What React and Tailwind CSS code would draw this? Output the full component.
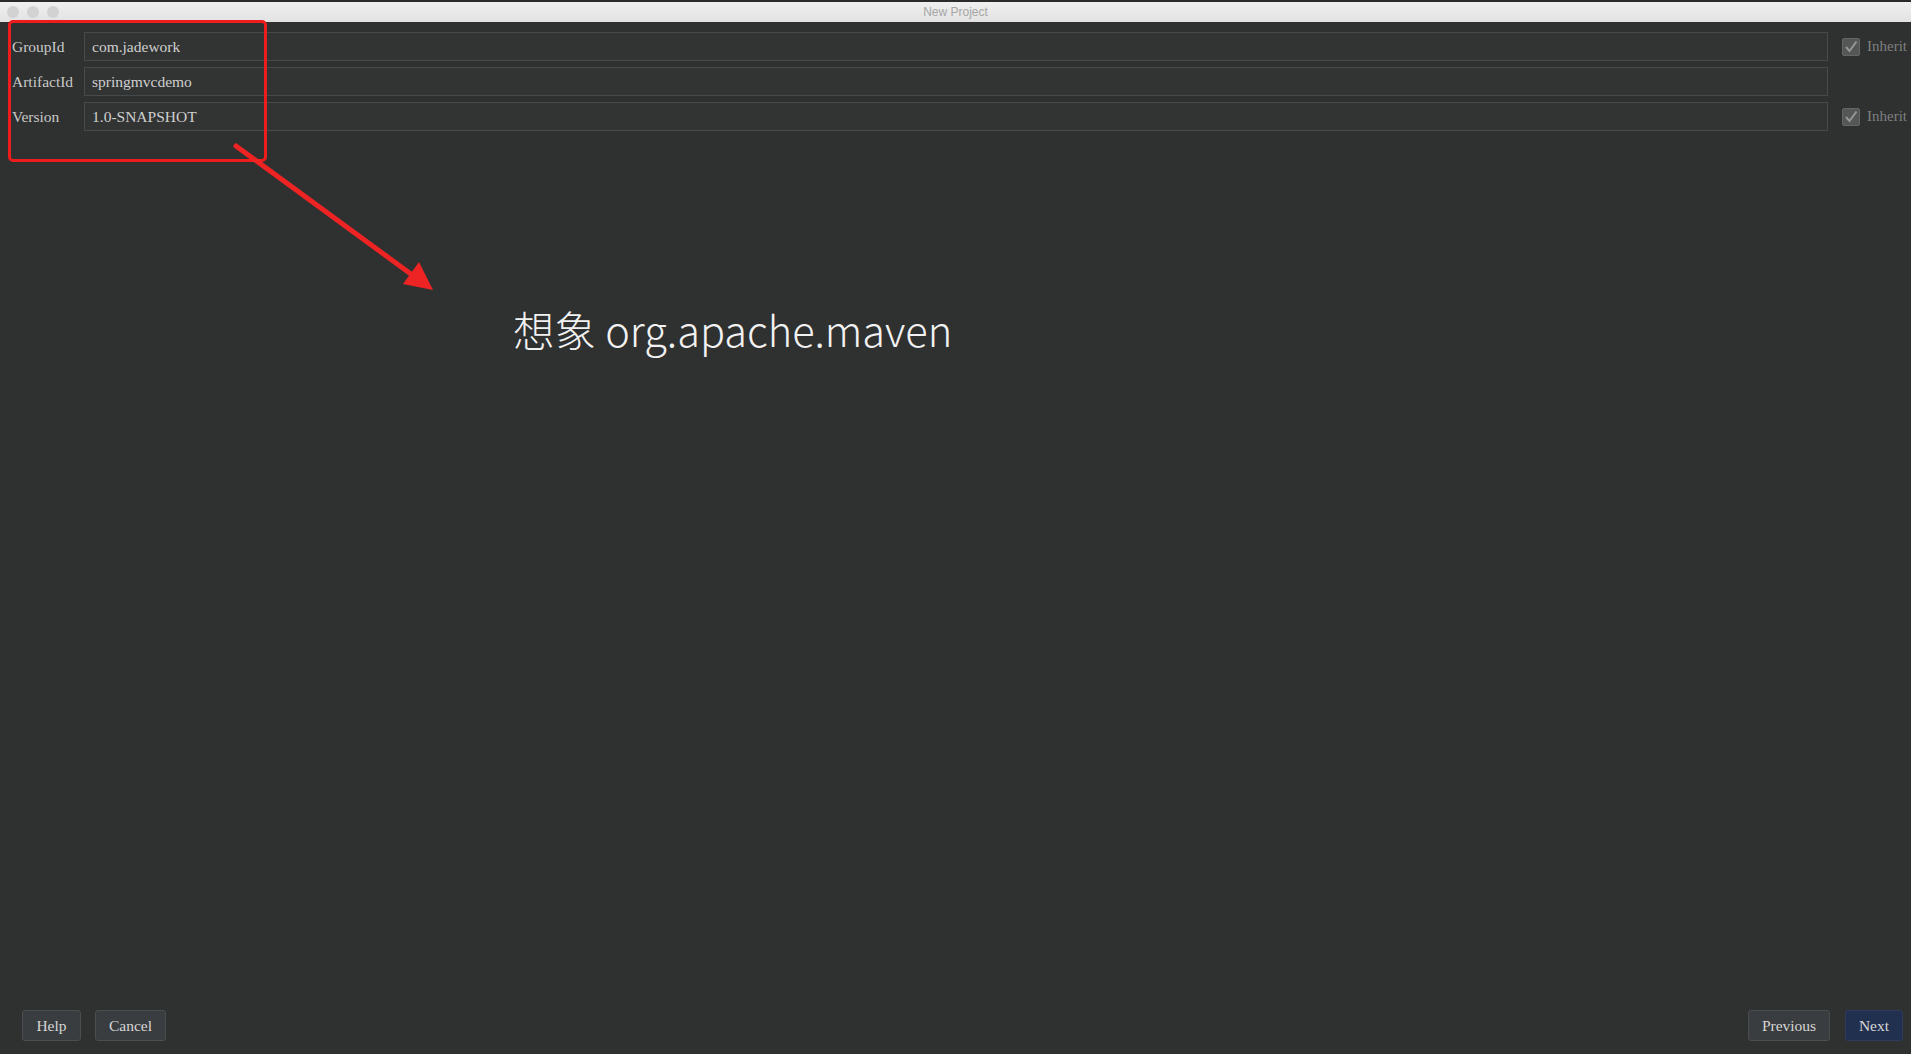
import React from 'react';

const serif = { fontFamily: '"Liberation Serif", "Times New Roman", serif' };

const Field = ({ label, value, inherit }) => (
  <div className="flex items-center h-[29px]">
    <div className="w-[84px] pl-[12px] text-[15.5px] text-[#c9c9c9]">{label}</div>
    <div className="flex-1 h-full flex items-center px-[7px] bg-[#323434] border border-[#474a4a] text-[15.5px] text-[#cfcfcf]">
      {value}
    </div>
    <div className="w-[83px] flex items-center pl-[14px] gap-[7px]">
      {inherit && (
        <>
          <div className="w-[18px] h-[18px] rounded-[2px] bg-[#555757] border border-[#646666] flex items-center justify-center">
            <svg width="14" height="14" viewBox="0 0 14 14">
              <path d="M2 7 L5.5 11 L12.5 1.5" stroke="#959797" strokeWidth="2" fill="none" />
            </svg>
          </div>
          <span className="text-[15px] text-[#7e8080]">Inherit</span>
        </>
      )}
    </div>
  </div>
);

const Btn = ({ children, primary, w }) => (
  <button
    className={
      'h-[31px] rounded-[3px] border text-[15.5px] text-[#d6d6d6] ' +
      (primary ? 'bg-[#22304f] border-[#2e3b5c]' : 'bg-[#3a3d3f] border-[#4b4e50]')
    }
    style={{ width: w }}
  >
    {children}
  </button>
);

export default function App() {
  return (
    <div className="relative w-[1911px] h-[1054px] flex flex-col bg-[#2f3030] overflow-hidden" style={serif}>
      {/* title bar */}
      <div className="relative h-[22px] bg-gradient-to-b from-[#f0f0f0] to-[#e2e2e2] border-t-[2px] border-[#2b2b2b] flex items-center justify-center">
        <div className="absolute left-[7px] top-[4px] flex gap-[8px]">
          <div className="w-[12px] h-[12px] rounded-full bg-[#d2d2d2]" />
          <div className="w-[12px] h-[12px] rounded-full bg-[#d2d2d2]" />
          <div className="w-[12px] h-[12px] rounded-full bg-[#d2d2d2]" />
        </div>
        <span className="text-[12px] text-[#a6a6a6]" style={{ fontFamily: '"Liberation Sans", Arial, sans-serif' }}>
          New Project
        </span>
      </div>

      <div className="flex-1 flex flex-col pt-[10px] gap-[6px]">
        <Field label="GroupId" value="com.jadework" inherit />
        <Field label="ArtifactId" value="springmvcdemo" />
        <Field label="Version" value="1.0-SNAPSHOT" inherit />
      </div>

      <div className="flex items-center justify-between pl-[22px] pr-[8px] pb-[13px]">
        <div className="flex gap-[14px]">
          <Btn w={59}>Help</Btn>
          <Btn w={71}>Cancel</Btn>
        </div>
        <div className="flex gap-[15px]">
          <Btn w={82}>Previous</Btn>
          <Btn w={58} primary>Next</Btn>
        </div>
      </div>

      {/* annotations */}
      <div className="absolute left-[8px] top-[20px] w-[259px] h-[142px] border-[3px] border-[#ee1c1c] rounded-[5px]" />
      <svg className="absolute left-0 top-0" width="500" height="320" viewBox="0 0 500 320">
        <line x1="236" y1="146" x2="415" y2="277" stroke="#ee2424" strokeWidth="5" strokeLinecap="round" />
        <polygon points="433,290 403,284 419,262" fill="#ee2424" />
      </svg>
      <div
        className="absolute left-[513px] top-[301px] text-[41.5px] leading-[56px] text-[#f2f2f2] font-light"
        style={{ fontFamily: '"Noto Sans CJK SC", "Noto Sans", sans-serif' }}
      >
        想象 org.apache.maven
      </div>
    </div>
  );
}
